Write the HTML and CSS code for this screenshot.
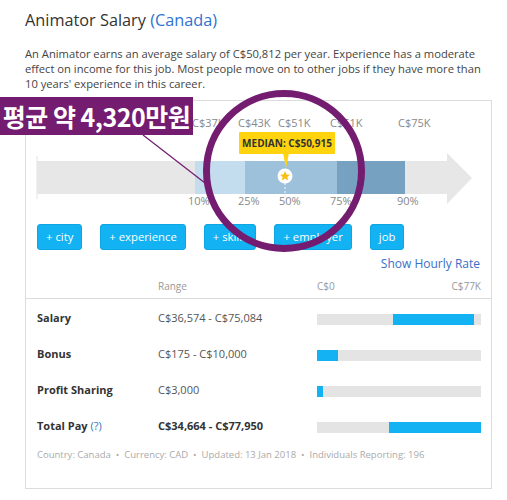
FILE: index.html
```html
<!DOCTYPE html>
<html lang="en">
<head>
  <meta charset="UTF-8">
  <title>Animator Salary (Canada)</title>
  <link rel="stylesheet" href="styles.css">
</head>
<body>
<div class="page">

  <h1 class="title">Animator Salary <a href="#" class="country">(Canada)</a></h1>

  <p class="intro">An Animator earns an average salary of C$50,812 per year. Experience has a moderate effect on income for this job. Most people move on to other jobs if they have more than 10 years' experience in this career.</p>

  <div class="card">

    <!-- percentile chart -->
    <svg class="chart" width="465" height="112" viewBox="0 0 465 112">
      <line x1="11" y1="55" x2="11" y2="98" stroke="#e2e2e2" stroke-width="1"/>
      <polygon points="11,60 421,60 421,52 446,77 421,103 421,93 11,93" fill="#e7e7e7"/>
      <rect x="169" y="60" width="50" height="33" fill="#c4ddee"/>
      <rect x="219" y="60" width="92" height="33" fill="#9ec1db"/>
      <rect x="311" y="60" width="68" height="33" fill="#76a1c1"/>

      <g class="chart-label">
        <text x="166" y="26">C$37K</text>
        <text x="212" y="26">C$43K</text>
        <text x="252" y="26">C$51K</text>
        <text x="304" y="26">C$61K</text>
        <text x="372" y="26">C$75K</text>

        <text x="162" y="104">10%</text>
        <text x="212" y="104">25%</text>
        <text x="253" y="104">50%</text>
        <text x="304" y="104">75%</text>
        <text x="371" y="104">90%</text>
      </g>

      <line x1="259" y1="82" x2="259" y2="96" stroke="#e8eef4" stroke-width="1.2" stroke-dasharray="2 2"/>
      <rect x="213" y="31" width="96" height="22" rx="1" fill="#ffd40f"/>
      <polygon points="257,52 263,52 260,67" fill="#ffd40f"/>
      <text class="median" x="261" y="46" text-anchor="middle">MEDIAN: C$50,915</text>
      <circle cx="259" cy="75" r="7.5" fill="#fff"/>
      <polygon points="259,70 260.5,73.5 264,73.7 261.3,76 262.2,79.6 259,77.6 255.8,79.6 256.7,76 254,73.7 257.5,73.5" fill="#f7bf10"/>
    </svg>

    <div class="filters">
      <a href="#" class="filter">+ city</a>
      <a href="#" class="filter">+ experience</a>
      <a href="#" class="filter">+ skills</a>
      <a href="#" class="filter">+ employer</a>
      <a href="#" class="filter">job</a>
    </div>

    <div class="hourly"><a href="#">Show Hourly Rate</a></div>

    <div class="pay-head">
      <span></span>
      <span>Range</span>
      <span class="scale"><span>C$0</span><span>C$77K</span></span>
    </div>

    <div class="pay-row">
      <span class="pay-name">Salary</span>
      <span class="pay-range">C$36,574 - C$75,084</span>
      <span class="pay-bar"><span class="pay-fill" style="left: 46.6%; width: 49.4%"></span></span>
    </div>
    <div class="pay-row">
      <span class="pay-name">Bonus</span>
      <span class="pay-range">C$175 - C$10,000</span>
      <span class="pay-bar"><span class="pay-fill" style="left: 0; width: 12.8%"></span></span>
    </div>
    <div class="pay-row">
      <span class="pay-name">Profit Sharing</span>
      <span class="pay-range">C$3,000</span>
      <span class="pay-bar"><span class="pay-fill" style="left: 0; width: 3.9%"></span></span>
    </div>
    <div class="pay-row">
      <span class="pay-name">Total Pay <a href="#">(?)</a></span>
      <span class="pay-range total">C$34,664 - C$77,950</span>
      <span class="pay-bar"><span class="pay-fill" style="left: 44.2%; width: 55.8%"></span></span>
    </div>

    <p class="meta">Country: Canada &nbsp;•&nbsp; Currency: CAD &nbsp;•&nbsp; Updated: 13 Jan 2018 &nbsp;•&nbsp; Individuals Reporting: 196</p>
  </div>

  <!-- annotation drawn over the page -->
  <div class="callout">평균 약 4,320만원</div>
  <svg class="overlay" width="507" height="500" viewBox="0 0 507 500">
    <line x1="143" y1="135" x2="205" y2="183" stroke="#731c70" stroke-width="1.2"/>
    <circle cx="284" cy="171" r="77.5" fill="none" stroke="#731c70" stroke-width="7"/>
  </svg>

</div>
</body>
</html>
```

FILE: styles.css
```css
body {
  margin: 0;
  background: #fff;
  font-family: "Open Sans", "Noto Sans", sans-serif;
  color: #444;
}

a {
  text-decoration: none;
}

.page {
  position: relative;
  width: 507px;
  height: 500px;
  padding: 9px 15px 0 25px;
  box-sizing: border-box;
}

.title {
  margin: 0;
  font-size: 16.3px;
  line-height: 22px;
  font-weight: normal;
  color: #333;
}

.country {
  color: #2f72d2;
}

.intro {
  margin: 15px 0 0;
  max-width: 462px;
  font-size: 11.2px;
  line-height: 15px;
  color: #444;
}

.card {
  margin-top: 9px;
  border: 1px solid #dcdcdc;
  padding-bottom: 26px;
}

.chart {
  display: block;
}

.chart-label text {
  font-family: "Open Sans", sans-serif;
  font-size: 11px;
  fill: #888;
}

.median {
  font-family: "Open Sans", sans-serif;
  font-size: 10px;
  font-weight: bold;
  fill: #333;
}

.filters {
  display: flex;
  gap: 18px;
  margin-top: 11px;
  padding-left: 11px;
}

.filter {
  height: 26px;
  line-height: 24px;
  padding: 0 8px;
  box-sizing: border-box;
  border: 1px solid #0ea6e2;
  border-radius: 3px;
  background: #12b2f3;
  color: #fff;
  font-size: 11.3px;
}

.hourly {
  margin-top: 6px;
  padding-right: 11px;
  text-align: right;
  font-size: 12px;
  line-height: 16px;
}

.hourly a {
  color: #3a6fc6;
}

.pay-head,
.pay-row {
  display: grid;
  grid-template-columns: 121px 159px 164px;
  padding-left: 11px;
  align-items: center;
}

.pay-head {
  margin-top: 7px;
  padding-bottom: 5px;
  border-bottom: 1px solid #dcdcdc;
  font-size: 10px;
  line-height: 14px;
  color: #999;
}

.scale {
  display: flex;
  justify-content: space-between;
}

.pay-row {
  height: 36px;
  font-size: 11px;
}

.pay-name {
  font-weight: bold;
  color: #333;
}

.pay-name a {
  font-weight: normal;
  color: #3a6fc6;
}

.pay-range {
  color: #555;
}

.pay-range.total {
  font-weight: bold;
  color: #333;
}

.pay-bar {
  position: relative;
  height: 11px;
  margin-top: 4px;
  background: #e4e4e4;
}

.pay-fill {
  position: absolute;
  top: 0;
  bottom: 0;
  background: #12b2f3;
}

.meta {
  margin: 5px 0 0;
  padding-left: 11px;
  font-size: 9.5px;
  line-height: 14px;
  color: #aaa;
}

.callout {
  position: absolute;
  left: 0;
  top: 97px;
  width: 193px;
  height: 38px;
  box-sizing: border-box;
  background: #731c70;
  color: #fff;
  font-family: "Noto Sans CJK KR", sans-serif;
  font-weight: bold;
  font-size: 25px;
  line-height: 38px;
  text-align: center;
  letter-spacing: -0.5px;
}

.overlay {
  position: absolute;
  left: 0;
  top: 0;
  pointer-events: none;
}
```
